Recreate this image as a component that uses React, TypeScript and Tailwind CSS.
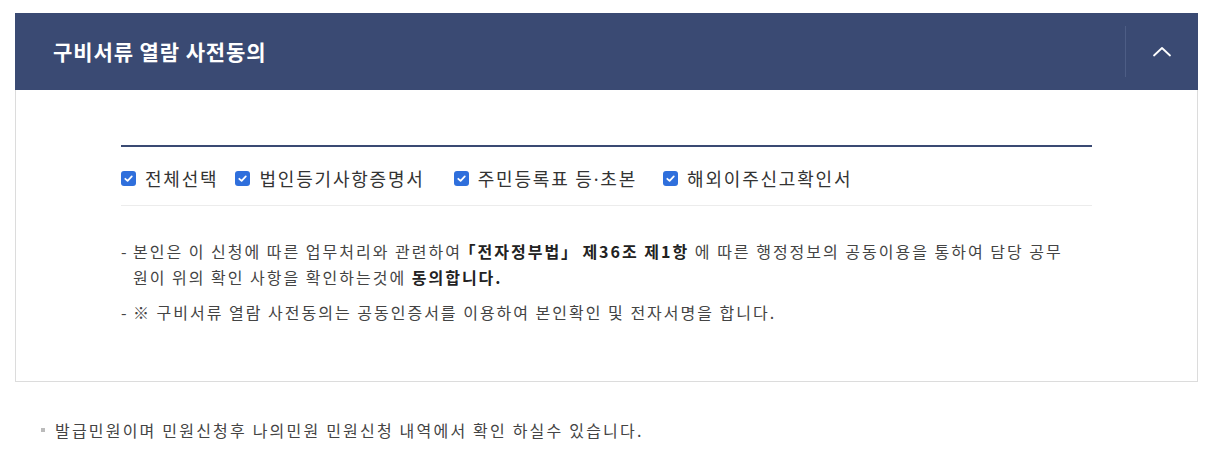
import type { ReactNode } from "react";

const FONT = { fontFamily: '"Noto Sans CJK KR", "Noto Sans", sans-serif' };

// Blue checked box
function CheckBox() {
  return (
    <span className="inline-flex w-[15px] h-[15px] rounded-[3px] bg-[#2f6fdc] items-center justify-center shrink-0">
      <svg width="11" height="11" viewBox="0 0 12 12" fill="none">
        <polyline points="2.5,6.3 5,8.6 9.6,3.6" stroke="#fff" strokeWidth="1.9" strokeLinecap="round" strokeLinejoin="round" />
      </svg>
    </span>
  );
}

function CheckItem({ label, className = "" }: { label: ReactNode; className?: string }) {
  return (
    <label className={`flex items-center gap-[9px] ${className}`}>
      <CheckBox />
      <span className="text-[18px] text-[#333] tracking-[1.8px]">{label}</span>
    </label>
  );
}

function Note({ children }: { children: ReactNode }) {
  return (
    <div className="flex text-[16px] leading-[26px] text-[#444] tracking-[2px]">
      <span className="w-[12px] shrink-0 tracking-normal">-</span>
      <p>{children}</p>
    </div>
  );
}

export default function App() {
  return (
    <div className="w-[1213px] h-[450px] bg-white pt-[13px]" style={FONT}>
      <section className="ml-[15px] w-[1183px]">
        <header className="h-[77px] bg-[#3a4a73] flex items-center">
          <h2 className="flex-1 pl-[38px] text-[21px] font-bold text-white tracking-[0.9px]">구비서류 열람 사전동의</h2>
          <div className="w-px h-[51px] bg-[#4d5d85]" />
          <button className="w-[72px] h-full flex items-center justify-center">
            <svg width="20" height="11" viewBox="0 0 20 11" fill="none">
              <polyline points="2,9.5 10,2 18,9.5" stroke="#fff" strokeWidth="1.8" strokeLinecap="round" strokeLinejoin="round" />
            </svg>
          </button>
        </header>
        <div className="h-[292px] border border-t-0 border-[#dcdcdc] pt-[55px] pl-[105px] pr-[105px]">
          <div className="border-t-2 border-[#3a4a73] border-b border-b-[#ececec] h-[61px] flex items-center pt-[5px]">
            <CheckItem label="전체선택" className="mr-[17px]" />
            <CheckItem label="법인등기사항증명서" className="mr-[29px]" />
            <CheckItem
              label={
                <>
                  주민등록표 등<span style={{ fontFamily: '"Noto Sans", sans-serif' }}>·</span>초본
                </>
              }
              className="mr-[26px]"
            />
            <CheckItem label="해외이주신고확인서" />
          </div>
          <div className="pt-[32px] flex flex-col gap-[9px]">
            <Note>
              본인은 이 신청에 따른 업무처리와 관련하여{" "}
              <b className="text-[#222]">
                <span className="[font-feature-settings:'halt']">「</span>전자정부법
                <span className="[font-feature-settings:'halt']">」</span>&nbsp; 제36조 제1항
              </b>{" "}
              에 따른 행정정보의 공동이용을 통하여 담당 공무
              <br />
              원이 위의 확인 사항을 확인하는것에 <b className="text-[#222]">동의합니다.</b>
            </Note>
            <Note>※ 구비서류 열람 사전동의는 공동인증서를 이용하여 본인확인 및 전자서명을 합니다.</Note>
          </div>
        </div>
      </section>
      <p className="mt-[36px] ml-[41px] flex items-center text-[16px] text-[#444] tracking-[2.2px]">
        <span className="w-[4px] h-[4px] bg-[#bbb] mr-[10px]" />
        발급민원이며 민원신청후 나의민원 민원신청 내역에서 확인 하실수 있습니다.
      </p>
    </div>
  );
}
